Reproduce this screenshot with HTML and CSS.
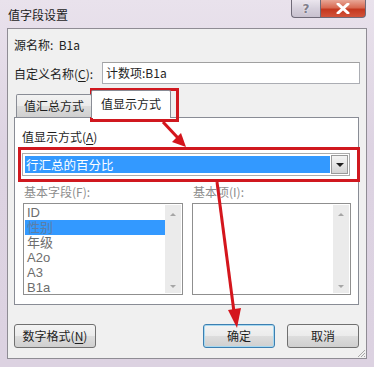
FILE: index.html
```html
<!DOCTYPE html>
<html lang="zh-CN">
<head>
    <meta charset="UTF-8">
    <title>值字段设置</title>
    <link rel="stylesheet" href="styles.css">
</head>
<body>
    <div class="window">
        <div class="titlebar">
            <span class="title">值字段设置</span>
            <div class="caption-btns">
                <div class="cap help">?</div>
                <div class="cap close">
                    <svg width="14" height="11" viewBox="0 0 14 11"><path d="M2 1 L12 10 M12 1 L2 10" stroke="#fff" stroke-width="3" stroke-linecap="round"/></svg>
                </div>
            </div>
        </div>

        <div class="client">
            <div class="row source">源名称:&nbsp; B1a</div>
            <div class="row name">
                <span class="label">自定义名称(<u>C</u>):</span>
                <div class="input">计数项:B1a</div>
            </div>

            <div class="tabs">
                <div class="tab">值汇总方式</div>
                <div class="tab active">值显示方式</div>
            </div>
            <div class="panel">
                <div class="label">值显示方式(<u>A</u>)</div>
                <div class="combo">
                    <div class="combo-value">行汇总的百分比</div>
                    <div class="combo-btn"><span class="tri"></span></div>
                </div>
                <div class="lists">
                    <div class="list-col">
                        <div class="label disabled">基本字段(F):</div>
                        <div class="listbox">
                            <ul class="items">
                                <li>ID</li>
                                <li class="sel">性别</li>
                                <li>年级</li>
                                <li>A2o</li>
                                <li>A3</li>
                                <li>B1a</li>
                            </ul>
                            <div class="scroll"><span class="up"></span><span class="down"></span></div>
                        </div>
                    </div>
                    <div class="list-col">
                        <div class="label disabled">基本项(I):</div>
                        <div class="listbox">
                            <ul class="items"></ul>
                            <div class="scroll"><span class="up"></span><span class="down"></span></div>
                        </div>
                    </div>
                </div>
            </div>

            <div class="buttons">
                <div class="btn">数字格式(<u>N</u>)</div>
                <div class="spacer"></div>
                <div class="btn default">确定</div>
                <div class="btn">取消</div>
            </div>
            <svg class="grip" width="9" height="9" viewBox="0 0 9 9">
                <path d="M8 1 L1 8 M8 4 L4 8 M8 7 L7 8" stroke="#a8a8a8" stroke-width="1"/>
            </svg>
        </div>

        <!-- annotations drawn on top of the screenshot -->
        <div class="mark mark-tab"></div>
        <div class="mark mark-combo"></div>
        <svg class="arrows" width="374" height="367" viewBox="0 0 374 367">
            <path d="M163 122 L178 138" stroke="#d4161d" stroke-width="3"/>
            <path d="M186 147 L172 142 L181 133 Z" fill="#d4161d"/>
            <path d="M217 182 L234 312" stroke="#d4161d" stroke-width="3"/>
            <path d="M237 328 L228 310 L241 308 Z" fill="#d4161d"/>
        </svg>
    </div>
</body>
</html>
```

FILE: styles.css
```css
* {
    box-sizing: border-box;
}

html, body {
    margin: 0;
    padding: 0;
}

ul, li {
    margin: 0;
    padding: 0;
    list-style: none;
}

u {
    text-decoration: underline;
    text-underline-offset: 2px;
}

.window {
    position: relative;
    width: 374px;
    height: 367px;
    background: linear-gradient(to bottom, #e9e2ec 0%, #ddd3e2 40%, #dcd2e1 100%);
    font-family: "Noto Sans CJK SC", "Noto Sans", sans-serif;
    font-size: 12px;
    color: #1e1e1e;
    overflow: hidden;
}

.titlebar {
    height: 28px;
    display: flex;
    align-items: flex-start;
    padding-left: 8px;
}

.title {
    margin-top: 6px;
    line-height: 18px;
    font-size: 12px;
    color: #1c1c1c;
}

.caption-btns {
    margin-left: auto;
    margin-right: 8px;
    display: flex;
    height: 18px;
}

.cap {
    height: 18px;
    border: 1px solid #6f6a78;
    border-top: none;
    display: flex;
    align-items: center;
    justify-content: center;
}

.help {
    width: 29px;
    border-right: none;
    border-radius: 0 0 0 4px;
    background: linear-gradient(to bottom, #ebe6ee 0%, #d6d0dc 50%, #c8c1cf 100%);
    color: #7f7d8a;
    font-family: "DejaVu Sans", sans-serif;
    font-weight: bold;
    font-size: 12px;
    text-shadow: 0 0 2px #fff;
}

.close {
    width: 46px;
    border-radius: 0 0 4px 0;
    background: linear-gradient(to bottom, #e8a696 0%, #d86a52 45%, #c4381f 55%, #d2533a 100%);
}

.client {
    position: relative;
    margin: 0 7px;
    height: 331px;
    border: 1px solid #8f8c94;
    background: #f0f0f0;
    padding: 0 7px 0 6px;
    display: flex;
    flex-direction: column;
}

.row {
    display: flex;
    align-items: center;
}

.source {
    margin-top: 6px;
    height: 18px;
}

.name {
    margin-top: 9px;
    height: 22px;
}

.name .label {
    width: 88px;
}

.input {
    flex: 1;
    height: 22px;
    background: #fff;
    border: 1px solid #abadb3;
    border-top-color: #a0a0a0;
    padding-left: 3px;
    line-height: 19px;
    margin-right: -1px;
}

.tabs {
    margin-top: 6px;
    height: 27px;
    display: flex;
    align-items: flex-end;
    padding-left: 2px;
    position: relative;
    z-index: 1;
}

.tab {
    height: 23px;
    width: 76px;
    border: 1px solid #898c95;
    border-bottom: none;
    border-radius: 2px 2px 0 0;
    background: linear-gradient(to bottom, #f2f2f2 0%, #ebebeb 50%, #dddddd 51%, #cfcfcf 100%);
    text-align: center;
    line-height: 21px;
    font-size: 12px;
}

.tab.active {
    width: 80px;
    height: 28px;
    margin-left: -1px;
    margin-bottom: -1px;
    background: #fff;
    line-height: 25px;
}

.panel {
    height: 188px;
    background: #fff;
    border: 1px solid #898c95;
    padding: 11px 6px 0 7px;
    display: flex;
    flex-direction: column;
}

.panel .label {
    line-height: 16px;
    height: 16px;
}

.label.disabled {
    color: #8d8d8d;
}

.combo {
    margin-top: 8px;
    height: 23px;
    margin-right: 2px;
    border: 1px solid #acacac;
    background: #fff;
    display: flex;
    align-items: center;
    padding: 0 1px 0 2px;
}

.combo-value {
    flex: 1;
    height: 17px;
    background: #3399ff;
    color: #fff;
    line-height: 17px;
    padding-left: 1px;
    font-size: 12.5px;
}

.combo-btn {
    width: 17px;
    height: 19px;
    margin-left: 1px;
    border: 1px solid #9a9a9a;
    background: linear-gradient(to bottom, #f4f4f4 0%, #e6e6e6 50%, #d4d4d4 100%);
    display: flex;
    align-items: center;
    justify-content: center;
}

.tri {
    width: 0;
    height: 0;
    border-left: 4px solid transparent;
    border-right: 4px solid transparent;
    border-top: 4px solid #1e1e1e;
}

.lists {
    margin-top: 8px;
    display: flex;
    gap: 9px;
    margin-left: 1px;
}

.list-col {
    display: flex;
    flex-direction: column;
}

.list-col .label {
    padding-left: 1px;
}

.listbox {
    margin-top: 3px;
    width: 160px;
    height: 92px;
    border: 1px solid #8f8f8f;
    background: #fff;
    display: flex;
    padding: 1px;
}

.list-col:last-child .listbox {
    width: 159px;
}

.items {
    flex: 1;
}

.items li {
    height: 15px;
    line-height: 15px;
    padding-left: 2px;
    font-family: "Liberation Sans", "Noto Sans CJK SC", sans-serif;
    font-size: 13px;
    color: #6d6d6d;
}

.items li.sel {
    background: #3399ff;
    color: #5d7ea6;
}

.scroll {
    width: 16px;
    background: #ebebeb;
    display: flex;
    flex-direction: column;
    justify-content: space-between;
    align-items: center;
    padding: 8px 0 5px;
}

.up, .down {
    width: 0;
    height: 0;
    border-left: 3px solid transparent;
    border-right: 3px solid transparent;
}

.up {
    border-bottom: 3px solid #a6a6a6;
}

.down {
    border-top: 3px solid #a6a6a6;
}

.buttons {
    margin-top: 19px;
    display: flex;
    gap: 12px;
    height: 24px;
}

.spacer {
    flex: 1;
}

.btn {
    height: 24px;
    width: 72px;
    border: 1px solid #707070;
    border-radius: 3px;
    background: linear-gradient(to bottom, #f3f3f3 0%, #ebebeb 50%, #dddddd 51%, #cfcfcf 100%);
    text-align: center;
    line-height: 21px;
    font-size: 12px;
}

.btn:first-child {
    width: 82px;
}

.btn.default {
    border-color: #3c7fb1;
    box-shadow: inset 0 0 0 1px #a6d8f0;
}

.grip {
    position: absolute;
    right: 0;
    bottom: 0;
}

.mark {
    position: absolute;
    border: 3px solid #d0181f;
}

.mark-tab {
    left: 90px;
    top: 88px;
    width: 89px;
    height: 34px;
}

.mark-combo {
    left: 18px;
    top: 147px;
    width: 342px;
    height: 35px;
}

.arrows {
    position: absolute;
    left: 0;
    top: 0;
    pointer-events: none;
}
```
